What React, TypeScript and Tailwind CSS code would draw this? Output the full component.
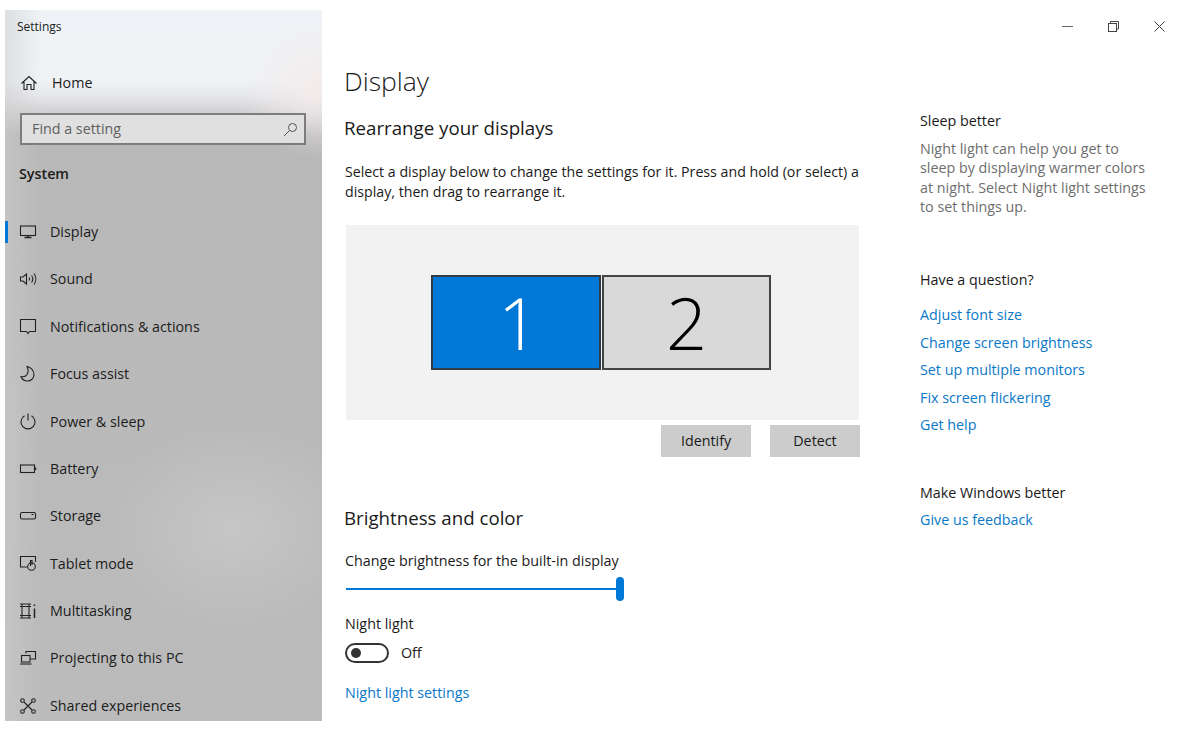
const font = 'font-["Open_Sans","Noto_Sans",sans-serif]';

function Ico({ children }: { children: React.ReactNode }) {
  return (
    <svg width="18" height="18" viewBox="0 0 18 18" fill="none" stroke="#222" strokeWidth="1.1" className="shrink-0">
      {children}
    </svg>
  );
}

const navItems: { label: string; icon: React.ReactNode }[] = [
  { label: 'Display', icon: <><rect x="1.5" y="3" width="15" height="9.5" /><path d="M9 12.5v2M5.5 14.5h7" strokeWidth="1.6" /></> },
  { label: 'Sound', icon: <><path d="M1.5 7v4h2.5l3.5 3V4L4 7z" /><path d="M10 7.5c.8 1 .8 2 0 3M12.5 5.5c1.6 2 1.6 5 0 7M15 3.5c2.4 3.2 2.4 7.8 0 11" /></> },
  { label: 'Notifications & actions', icon: <path d="M1.5 2.5h15v12h-6l-1.5 2-1.5-2h-6z" /> },
  { label: 'Focus assist', icon: <path d="M8 1.5c3 .4 7 3.5 7 8 0 4-3 6.5-6.5 6.5-3 0-5.5-1.7-6.5-4.5 5 1.5 9-3.5 6-10z" /> },
  { label: 'Power & sleep', icon: <><path d="M9 1.5v7" /><path d="M5.5 3.8a7 7 0 1 0 7 0" /></> },
  { label: 'Battery', icon: <><rect x="1.5" y="5" width="14" height="7.5" /><path d="M16.5 7.5V10" strokeWidth="1.5" /></> },
  { label: 'Storage', icon: <><rect x="1.5" y="5.5" width="15" height="6.5" rx="1.5" /><path d="M12.5 7.5h2" /></> },
  { label: 'Tablet mode', icon: <><path d="M8 13H1.5V2.5h15V8" /><circle cx="12.5" cy="12.5" r="3.8" /><path d="M11.5 12V6.5H13V11" /></> },
  { label: 'Multitasking', icon: <><path d="M1 2h11M1 16h11M3 2v14M10 2v14M1 4.5h11M1 13.5h11" /><path d="M15.5 2.5V4M15.5 6.5V16" strokeWidth="1.5" /></> },
  { label: 'Projecting to this PC', icon: <><path d="M7 4.5v-2h9.5V10H11" /><rect x="2.5" y="6.5" width="8.5" height="6.5" /><path d="M1 15h11.5" /></> },
  { label: 'Shared experiences', icon: <><circle cx="3.5" cy="3.5" r="1.8" /><circle cx="14.5" cy="3.5" r="1.8" /><circle cx="3.5" cy="14.5" r="1.8" /><circle cx="14.5" cy="14.5" r="1.8" /><path d="M5 5l8 8M13 5l-8 8" /></> },
];

const helpLinks = ['Adjust font size', 'Change screen brightness', 'Set up multiple monitors', 'Fix screen flickering', 'Get help'];

export default function App() {
  return (
    <div className={`${font} w-[1177px] h-[729px] overflow-hidden bg-white flex pt-[10px] pl-[5px] text-[14.3px] text-[#1a1a1a]`}>
      {/* sidebar */}
      <aside className="w-[317px] h-[711px] shrink-0 text-[#1c1c1c] bg-[radial-gradient(ellipse_80px_70px_at_100%_11%,#f3ebeb,transparent),radial-gradient(ellipse_130px_100px_at_72%_73%,#c6c6c6,transparent),linear-gradient(90deg,#cdcdcd88,transparent_36px),linear-gradient(180deg,#eef2f6_0,#f0f3f6_70px,#e4e5e8_88px,#d4d4d6_100px,#b8b8b8_125px,#bbbbbb_100%)]">
        <div className="pl-[12px] pt-[9px] text-[12px] leading-[16px]">Settings</div>
        <div className="flex items-center h-[24px] mt-[36px] pl-[15px] gap-[14px]">
          <svg width="18" height="18" viewBox="0 0 18 18" fill="none" stroke="#222" strokeWidth="1.1" className="shrink-0">
            <path d="M1.5 9.5 9 2.5l7.5 7M4 7.5v8h3v-5h4v5h3v-8" />
          </svg>
          <span>Home</span>
        </div>
        <div className="ml-[15px] mt-[18px] w-[286px] h-[32px] border-2 border-[#7d7d7d] bg-[#e0e0e0] flex items-center justify-between pl-[10px] pr-[6px] text-[#5f5f5f]">
          <span>Find a setting</span>
          <svg width="15" height="15" viewBox="0 0 15 15" fill="none" stroke="#555" strokeWidth="1">
            <circle cx="9.5" cy="5.5" r="4" /><path d="M6.5 8.5 1 14" />
          </svg>
        </div>
        <div className="pl-[14px] mt-[19px] leading-[20px] font-semibold">System</div>
        <nav className="mt-[24px]">
          {navItems.map((item, i) => (
            <div key={item.label} className="relative h-[47.4px] flex items-center pl-[14px] gap-[13px]">
              {i === 0 && <div className="absolute left-0 top-[13px] w-[3px] h-[22px] bg-[#0078d7]" />}
              <Ico>{item.icon}</Ico>
              <span>{item.label}</span>
            </div>
          ))}
        </nav>
      </aside>

      {/* main */}
      <main className="flex-1 flex flex-col">
        <div className="flex justify-end gap-[35px] pr-[12px] pt-[11px] h-[36px]">
          <svg width="11" height="11" viewBox="0 0 11 11" stroke="#666" fill="none"><path d="M0 5.5h11" /></svg>
          <svg width="11" height="11" viewBox="0 0 11 11" stroke="#444" fill="none"><path d="M2.5 2.5V.5h8V8h-2" /><rect x=".5" y="2.5" width="8" height="8" /></svg>
          <svg width="11" height="11" viewBox="0 0 11 11" stroke="#444" fill="none"><path d="M.5.5l10 10M10.5.5l-10 10" /></svg>
        </div>
        <div className="flex">
          <div className="w-[598px] pl-[22px]">
            <h1 className="text-[26.5px] leading-[36px] font-light mt-[17px]">Display</h1>
            <h2 className="text-[18.7px] leading-[28px] mt-[15px]">Rearrange your displays</h2>
            <p className="ml-[1px] mt-[20px] w-[526px] text-[14.2px] leading-[20px]">
              Select a display below to change the settings for it. Press and hold (or select) a display, then drag to rearrange it.
            </p>
            <div className="ml-[2px] mt-[23px] w-[513px] h-[195px] bg-[#f2f2f2] flex items-center justify-center gap-[1px] pr-[3px] pb-[1px]">
              <div className="w-[170px] h-[95px] border-2 border-[#2f3b46] bg-[#0078d7] text-white flex items-center justify-center pl-[5px] text-[72px] font-light leading-none">1</div>
              <div className="w-[169px] h-[95px] border-2 border-[#444] bg-[#d9d9d9] text-black flex items-center justify-center text-[72px] font-light leading-none">2</div>
            </div>
            <div className="ml-[2px] mt-[5px] w-[514px] flex justify-end gap-[19px]">
              <div className="w-[90px] h-[32px] bg-[#cccccc] flex items-center justify-center">Identify</div>
              <div className="w-[90px] h-[32px] bg-[#cccccc] flex items-center justify-center">Detect</div>
            </div>
            <h2 className="text-[18.7px] leading-[28px] mt-[47px]">Brightness and color</h2>
            <div className="ml-[1px] mt-[19px] leading-[20px]">Change brightness for the built-in display</div>
            <div className="ml-[2px] mt-[6px] w-[278px] h-[24px] flex items-center">
              <div className="flex-1 h-[2px] bg-[#0078d7]" />
              <div className="w-[8px] h-[24px] rounded-[4px] bg-[#0078d7]" />
            </div>
            <div className="ml-[1px] mt-[13px] leading-[20px]">Night light</div>
            <div className="ml-[1px] mt-[8px] flex items-center gap-[12px]">
              <div className="w-[44px] h-[20px] rounded-full border-2 border-[#333] flex items-center pl-[4px]">
                <div className="w-[10px] h-[10px] rounded-full bg-[#333]" />
              </div>
              <span>Off</span>
            </div>
            <div className="ml-[1px] mt-[20px] leading-[20px] text-[#0a78c8]">Night light settings</div>
          </div>

          <div className="w-[232px] leading-[19.5px] mt-[65px]">
            <div>Sleep better</div>
            <p className="mt-[8px] text-[#6e6e6e]">Night light can help you get to sleep by displaying warmer colors at night. Select Night light settings to set things up.</p>
            <div className="mt-[53px]">Have a question?</div>
            <div className="mt-[16px] flex flex-col gap-[8px] text-[#0a78c8]">
              {helpLinks.map((l) => <div key={l}>{l}</div>)}
            </div>
            <div className="mt-[48px]">Make Windows better</div>
            <div className="mt-[8px] text-[#0a78c8]">Give us feedback</div>
          </div>
        </div>
      </main>
    </div>
  );
}
